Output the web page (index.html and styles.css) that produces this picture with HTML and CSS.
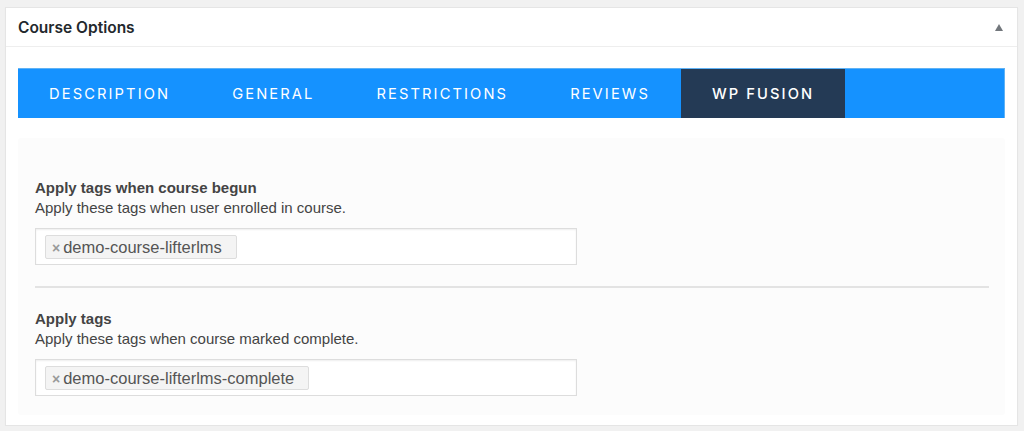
FILE: index.html
```html
<!DOCTYPE html>
<html lang="en">
<head>
    <meta charset="UTF-8">
    <title>Course Options</title>
    <link rel="stylesheet" href="styles.css">
</head>
<body>
    <div class="postbox">
        <div class="postbox-header">
            <h2>Course Options</h2>
            <span class="toggle"></span>
        </div>
        <div class="inside">
            <ul class="tabs">
                <li>Description</li>
                <li>General</li>
                <li>Restrictions</li>
                <li>Reviews</li>
                <li class="active">WP Fusion</li>
            </ul>
            <div class="panel">
                <div class="field">
                    <label>Apply tags when course begun</label>
                    <p class="desc">Apply these tags when user enrolled in course.</p>
                    <div class="select">
                        <span class="tag"><span class="x">&times;</span>demo-course-lifterlms</span>
                    </div>
                </div>
                <hr>
                <div class="field">
                    <label>Apply tags</label>
                    <p class="desc">Apply these tags when course marked complete.</p>
                    <div class="select">
                        <span class="tag"><span class="x">&times;</span>demo-course-lifterlms-complete</span>
                    </div>
                </div>
            </div>
        </div>
    </div>
</body>
</html>
```
FILE: styles.css
```css
body {
    margin: 0;
    background: #f1f1f1;
    font-family: "Liberation Sans", Arial, sans-serif;
    color: #444;
}

.postbox {
    margin: 7px 6px 0 5px;
    background: #fff;
    border: 1px solid #e5e5e5;
    box-shadow: 0 1px 1px rgba(0, 0, 0, 0.04);
}

.postbox-header {
    display: flex;
    justify-content: space-between;
    align-items: center;
    height: 38px;
    padding: 0 12px;
    border-bottom: 1px solid #eee;
}

.postbox-header h2 {
    margin: 0;
    font-family: Inter, sans-serif;
    font-size: 15.5px;
    font-weight: 600;
    color: #23282d;
}

.toggle {
    width: 0;
    height: 0;
    border-left: 4.5px solid transparent;
    border-right: 4.5px solid transparent;
    border-bottom: 7px solid #72777c;
    margin-right: 2px;
}

.inside {
    padding: 21px 12px 10px;
}

.tabs {
    display: flex;
    margin: 0;
    padding: 0;
    list-style: none;
    background: #1592ff;
    border-top: 1px solid #5fb2f5;
    border-right: 1px solid #5fb2f5;
}

.tabs li {
    height: 48px;
    padding: 1px 31px 0;
    line-height: 48px;
    font-family: Inter, sans-serif;
    font-size: 14.7px;
    font-weight: 400;
    letter-spacing: 2.1px;
    text-transform: uppercase;
    color: #fff;
}

.tabs li.active {
    background: #243a55;
    font-weight: 500;
}

.panel {
    margin-top: 20px;
    padding: 40px 17px 19px;
    background: #fcfcfc;
    border-radius: 3px;
}

.field label {
    display: block;
    font-size: 15px;
    font-weight: bold;
    color: #444;
    line-height: 20px;
}

.desc {
    margin: 0 0 10px;
    font-size: 15px;
    line-height: 20px;
    color: #444;
}

.select {
    box-sizing: border-box;
    width: 542px;
    height: 37px;
    padding: 6px 9px 0;
    background: #fff;
    border: 1px solid #ddd;
    box-shadow: inset 0 1px 2px rgba(0, 0, 0, 0.07);
}

.tag {
    display: inline-block;
    height: 22px;
    line-height: 22px;
    padding: 0 14px 0 6px;
    background: #f4f4f4;
    border: 1px solid #ddd;
    border-radius: 2px;
    font-size: 16.5px;
    color: #555;
}

.tag .x {
    margin-right: 3px;
    font-weight: bold;
    font-size: 14px;
    color: #999;
}

hr {
    margin: 21px 0 21px;
    width: 954px;
    border: 0;
    border-top: 2px solid #e3e3e3;
}
```
